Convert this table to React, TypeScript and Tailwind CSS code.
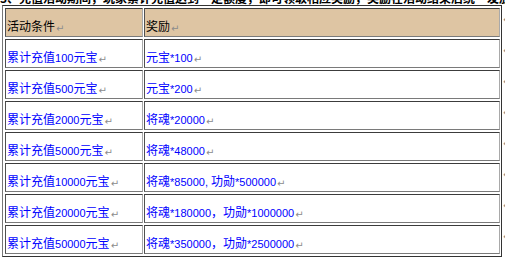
import React from 'react';

const rows: [string, string][] = [
  ['累计充值100元宝', '元宝*100'],
  ['累计充值500元宝', '元宝*200'],
  ['累计充值2000元宝', '将魂*20000'],
  ['累计充值5000元宝', '将魂*48000'],
  ['累计充值10000元宝', '将魂*85000, 功勋*500000'],
  ['累计充值20000元宝', '将魂*180000，功勋*1000000'],
  ['累计充值50000元宝', '将魂*350000，功勋*2500000'],
];

// ascii runs get a slightly smaller latin face so digits come out ~6px wide
function Mixed({ text }: { text: string }) {
  const parts = text.split(/([\x20-\x7e]+)/).filter(Boolean);
  return (
    <>
      {parts.map((p, i) =>
        /^[\x20-\x7e]+$/.test(p) ? (
          <span key={i} className="text-[11px] font-['Liberation_Sans',sans-serif] whitespace-pre">
            {p}
          </span>
        ) : (
          <span key={i}>{p}</span>
        )
      )}
    </>
  );
}

function ParaMark() {
  return (
    <span className="ml-[1px] text-[10px] text-[#8c8c8c] font-['DejaVu_Sans',sans-serif] relative top-[1px]">↵</span>
  );
}

function Cell({ children, head }: { children: React.ReactNode; head?: boolean }) {
  return (
    <div
      className={`h-[29px] flex items-end pl-[1px] pb-[1px] leading-[14px] whitespace-nowrap overflow-hidden border border-t-[#3c3c3c] border-l-[#505050] border-b-[#7a7a7a] border-r-[#a9a9a9] ${
        head ? 'bg-[#dec5a3] text-black' : 'bg-white text-[#0000ff]'
      }`}
    >
      <span>
        {children}
        <ParaMark />
      </span>
    </div>
  );
}

export default function App() {
  return (
    <div className="w-[505px] h-[259px] bg-white overflow-hidden text-[12px] font-['Noto_Sans_CJK_SC','Liberation_Sans',sans-serif]">
      {/* tail of the paragraph above the table */}
      <div className="h-[5px] overflow-hidden">
        <p className="-mt-[9px] leading-[14px] whitespace-nowrap font-bold text-black">
          3、充值活动期间，玩家累计充值达到一定额度，即可领取相应奖励，奖励在活动结束后统一发放至背包中，请注意查收。
        </p>
      </div>

      <div className="flex">
        <div className="ml-[2px] w-[500px] border border-[#333333] border-l-[#777777] pt-[2px] pl-[2px] pr-[1px] pb-[2px]">
          <div className="grid grid-cols-[138px_356px] gap-x-[1px] gap-y-[2px]">
            <Cell head>活动条件</Cell>
            <Cell head>奖励</Cell>
            {rows.map(([cond, reward]) => (
              <React.Fragment key={cond}>
                <Cell>
                  <Mixed text={cond} />
                </Cell>
                <Cell>
                  <Mixed text={reward} />
                </Cell>
              </React.Fragment>
            ))}
          </div>
        </div>

        {/* end-of-row marks */}
        <div className="flex flex-col gap-y-[21px] pt-[10px] pl-[1px]">
          {Array.from({ length: 8 }).map((_, i) => (
            <span key={i} className="h-[10px] leading-[10px] text-[10px] text-[#8c8c8c] font-['DejaVu_Sans',sans-serif]">
              ↵
            </span>
          ))}
        </div>
      </div>
    </div>
  );
}
